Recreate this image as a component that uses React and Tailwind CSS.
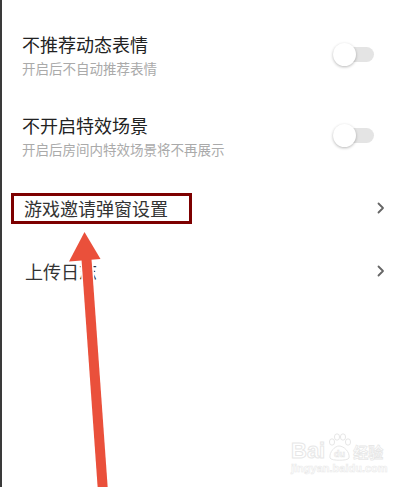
import React from 'react';

const font = "font-['Noto_Sans_CJK_SC','Noto_Sans',sans-serif]";

function Toggle() {
    return (
        <div className="relative w-[41px] h-[23px] flex items-center">
            <div className="w-[41px] h-[15px] rounded-full bg-[#e4e4e4]" />
            <div className="absolute left-0 top-0 w-[23px] h-[23px] rounded-full bg-white shadow-[0_1px_3px_rgba(0,0,0,0.28)]" />
        </div>
    );
}

function Chevron() {
    return (
        <svg width="8" height="12" viewBox="0 0 8 12" fill="none">
            <path d="M1.5 1.5 L6 6 L1.5 10.5" stroke="#666" strokeWidth="1.8" strokeLinecap="round" strokeLinejoin="round" />
        </svg>
    );
}

function SwitchRow({ title, desc }) {
    return (
        <div className="h-[81px] flex items-center justify-between pl-[20px] pr-[32px]">
            <div className="flex flex-col gap-[3px]">
                <div className="text-[18px] leading-[24px] text-[#222]">{title}</div>
                <div className="text-[13.5px] leading-[18px] text-[#aaa]">{desc}</div>
            </div>
            <Toggle />
        </div>
    );
}

export default function App() {
    return (
        <div className={`relative w-[406px] h-[487px] overflow-hidden bg-white border-l-2 border-[#3a3a3a] ${font}`}>
            <div className="pt-[14px]">
                <SwitchRow title="不推荐动态表情" desc="开启后不自动推荐表情" />
                <SwitchRow title="不开启特效场景" desc="开启后房间内特效场景将不再展示" />

                {/* 游戏邀请 row, with the annotation box round its text */}
                <div className="h-[64px] flex items-center justify-between pr-[21px]">
                    <div className="ml-[9px] w-[181px] h-[31px] border-[3px] border-[#7d0000] pl-[10px] flex items-center">
                        <span className="text-[18px] leading-[24px] text-[#333]">游戏邀请弹窗设置</span>
                    </div>
                    <Chevron />
                </div>

                <div className="h-[62px] flex items-center justify-between pl-[23px] pr-[21px]">
                    <span className="text-[18px] leading-[24px] text-[#333]">上传日志</span>
                    <Chevron />
                </div>
            </div>

            {/* red arrow annotation */}
            <svg className="absolute left-0 top-0" width="406" height="487" viewBox="0 0 406 487">
                <line x1="84" y1="252" x2="101" y2="492" stroke="#fff" strokeWidth="13" />
                <polygon points="82.5,229 64,263 101,260" fill="#fff" />
                <line x1="84" y1="252" x2="101" y2="492" stroke="#ea503b" strokeWidth="10" />
                <polygon points="82.5,232 67,261.5 98.5,259" fill="#ea503b" />
            </svg>

            {/* watermark */}
            <div className="absolute left-[289px] top-[432px] flex flex-col items-start opacity-60">
                <div className="flex items-end">
                    <span className="text-[22px] leading-[22px] font-bold text-white [-webkit-text-stroke:1px_#d8d8d8] font-['Liberation_Sans',sans-serif]">Bai</span>
                    <svg width="26" height="30" viewBox="0 0 26 30" className="mx-[1px]">
                        <g fill="none" stroke="#d8d8d8" strokeWidth="1">
                            <ellipse cx="6" cy="10" rx="2.6" ry="3.2" />
                            <ellipse cx="11" cy="5" rx="2.6" ry="3.2" />
                            <ellipse cx="17" cy="5" rx="2.6" ry="3.2" />
                            <ellipse cx="22" cy="10" rx="2.6" ry="3.2" />
                            <path d="M4 26 C3 20 9 14 13 14 C18 14 24 20 23 26 C22 29 5 29 4 26 Z" />
                        </g>
                        <text x="13.5" y="25" textAnchor="middle" fontSize="9" fontWeight="bold" fill="#fff" stroke="#d4d4d4" strokeWidth="0.6" fontFamily="Liberation Sans, sans-serif">du</text>
                    </svg>
                    <span className="text-[15px] leading-[20px] font-bold text-white [-webkit-text-stroke:0.8px_#d8d8d8]">经验</span>
                </div>
                <span className="text-[11px] leading-[13px] font-bold text-white [-webkit-text-stroke:0.6px_#dcdcdc] font-['Liberation_Sans',sans-serif]">jingyan.baidu.com</span>
            </div>
        </div>
    );
}
